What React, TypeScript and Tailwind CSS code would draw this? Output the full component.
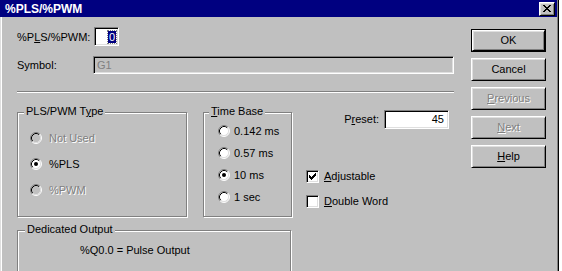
import type { ReactNode } from 'react';

const raised =
  'border border-t-white border-l-white border-r-black border-b-black shadow-[inset_1px_1px_0_#dfdfdf,inset_-1px_-1px_0_#808080]';
const sunken =
  'border border-t-[#808080] border-l-[#808080] border-r-white border-b-white shadow-[inset_1px_1px_0_#000,inset_-1px_-1px_0_#dfdfdf]';
const etched = 'border border-[#808080] shadow-[inset_1px_1px_0_#fff,1px_1px_0_#fff]';
const disabledText = 'text-[#808080] [text-shadow:1px_1px_0_#fff]';

function U({ children }: { children: ReactNode }) {
  return <span className="underline underline-offset-[1px]">{children}</span>;
}

// pixel X for the title bar close box
function CloseGlyph() {
  const rows = ['xx....xx', '.xx..xx.', '..xxxx..', '...xx...', '..xxxx..', '.xx..xx.', 'xx....xx'];
  return (
    <svg width="8" height="7" shapeRendering="crispEdges">
      {rows.flatMap((r, y) =>
        r.split('').map((c, x) => (c === 'x' ? <rect key={`${x}-${y}`} x={x} y={y} width="1" height="1" fill="#000" /> : null)),
      )}
    </svg>
  );
}

function Radio({ checked = false, disabled = false }: { checked?: boolean; disabled?: boolean }) {
  return (
    <svg width="12" height="12" viewBox="0 0 12 12" className="shrink-0">
      <circle cx="6" cy="6" r="5" fill={disabled ? '#c0c0c0' : '#fff'} />
      <path d="M2.11 9.89 A5.5 5.5 0 0 1 9.89 2.11" fill="none" stroke="#808080" />
      <path d="M9.89 2.11 A5.5 5.5 0 0 1 2.11 9.89" fill="none" stroke="#fff" />
      <path d="M2.82 9.18 A4.5 4.5 0 0 1 9.18 2.82" fill="none" stroke="#000" />
      <path d="M9.18 2.82 A4.5 4.5 0 0 1 2.82 9.18" fill="none" stroke="#dfdfdf" />
      {checked && <circle cx="6" cy="6" r="2" fill={disabled ? '#808080' : '#000'} />}
    </svg>
  );
}

function Check({ checked = false }: { checked?: boolean }) {
  const rows = ['......x', '.....xx', 'x...xxx', 'xx.xxx.', 'xxxxx..', '.xxx...', '..x....'];
  return (
    <div className={`w-[13px] h-[13px] bg-white shrink-0 ${sunken}`}>
      {checked && (
        <svg width="7" height="7" shapeRendering="crispEdges" className="ml-[2px] mt-[2px]">
          {rows.flatMap((r, y) =>
            r.split('').map((c, x) => (c === 'x' ? <rect key={`${x}-${y}`} x={x} y={y} width="1" height="1" fill="#000" /> : null)),
          )}
        </svg>
      )}
    </div>
  );
}

function Button({ children, disabled = false, isDefault = false }: { children: ReactNode; disabled?: boolean; isDefault?: boolean }) {
  const face = (
    <div className={`flex items-center justify-center h-full w-full bg-[#c0c0c0] ${raised} ${disabled ? disabledText : 'text-black'}`}>
      {children}
    </div>
  );
  return (
    <div className={`w-[75px] h-[23px] ${isDefault ? 'border border-black' : ''}`}>{face}</div>
  );
}

export default function App() {
  return (
    <div className="flex w-[562px] h-[271px] overflow-hidden bg-white font-['Liberation_Sans',Arial,sans-serif] text-[11px] leading-[13px] text-black">
      <div className="flex flex-col w-[559px] h-full bg-[#c0c0c0] shadow-[inset_1px_0_0_#dfdfdf,inset_2px_0_0_#fff,inset_-1px_0_0_#000,inset_-2px_0_0_#808080]">
        {/* title bar */}
        <div className="flex items-center justify-between h-[17px] mr-[2px] pl-[5px] pr-[2px] bg-[#000080] shrink-0">
          <span className="text-white font-bold text-[12px] leading-[14px]">%PLS/%PWM</span>
          <div className={`flex items-center justify-center w-[16px] h-[14px] bg-[#c0c0c0] ${raised}`}>
            <CloseGlyph />
          </div>
        </div>

        {/* body */}
        <div className="flex items-start pl-[17px]">
          <div className="flex flex-col w-[437px] mt-[10px]">
            <div className="flex items-center h-[19px]">
              <span className="w-[77px] pt-[2px]">
                %P<U>L</U>S/%PWM:
              </span>
              <div className={`flex items-center justify-end w-[25px] h-[19px] bg-white pr-[2px] ${sunken}`}>
                <span className="bg-[#000080] text-white px-[1px] leading-[12px] outline-1 outline-dotted outline-[#808080]">0</span>
              </div>
            </div>
            <div className="flex items-center h-[18px] mt-[10px]">
              <span className="w-[76px]">Symbol:</span>
              <div className={`flex items-center w-[361px] h-[18px] pl-[3px] ${sunken}`}>
                <span className="text-[#808080]">G1</span>
              </div>
            </div>
            <div className="h-[2px] mt-[17px] border-t border-t-[#808080] border-b border-b-white" />

            <div className="flex items-start">
              <div className="flex flex-col w-[275px]">
                <div className="flex gap-[16px] mt-[19px]">
                  <div className={`relative w-[170px] h-[105px] ${etched}`}>
                    <span className="absolute left-[6px] top-[-8px] px-[2px] bg-[#c0c0c0]">
                      PLS/PWM T<U>y</U>pe
                    </span>
                    <div className="flex flex-col gap-[14px] pt-[19px] pl-[12px]">
                      <div className="flex items-center gap-[7px] h-[12px]">
                        <Radio disabled />
                        <span className={disabledText}>Not Used</span>
                      </div>
                      <div className="flex items-center gap-[7px] h-[12px]">
                        <Radio checked />
                        <span>%PLS</span>
                      </div>
                      <div className="flex items-center gap-[7px] h-[12px]">
                        <Radio disabled />
                        <span className={disabledText}>%PWM</span>
                      </div>
                    </div>
                  </div>
                  <div className={`relative w-[89px] h-[105px] ${etched}`}>
                    <span className="absolute left-[5px] top-[-8px] px-[2px] bg-[#c0c0c0]">
                      <U>T</U>ime Base
                    </span>
                    <div className="flex flex-col gap-[10px] pt-[12px] pl-[14px]">
                      {['0.142 ms', '0.57 ms', '10 ms', '1 sec'].map((t) => (
                        <div key={t} className="flex items-center gap-[4px] h-[12px]">
                          <Radio checked={t === '10 ms'} />
                          <span>{t}</span>
                        </div>
                      ))}
                    </div>
                  </div>
                </div>
                <div className={`relative w-[274px] h-[60px] mt-[13px] ${etched}`}>
                  <span className="absolute left-[7px] top-[-8px] px-[2px] bg-[#c0c0c0]">Dedicated Output</span>
                  <div className="pt-[13px] pl-[62px]">%Q0.0 = Pulse Output</div>
                </div>
              </div>

              <div className="flex flex-col flex-1 mt-[17px]">
                <div className="flex items-center justify-end gap-[5px] pr-[5px]">
                  <span>
                    P<U>r</U>eset:
                  </span>
                  <div className={`flex items-center justify-end w-[65px] h-[19px] bg-white pr-[4px] ${sunken}`}>45</div>
                </div>
                <div className="flex flex-col gap-[12px] mt-[41px] pl-[14px]">
                  <div className="flex items-center gap-[5px] h-[13px]">
                    <Check checked />
                    <span>
                      <U>A</U>djustable
                    </span>
                  </div>
                  <div className="flex items-center gap-[5px] h-[13px]">
                    <Check />
                    <span>
                      <U>D</U>ouble Word
                    </span>
                  </div>
                </div>
              </div>
            </div>
          </div>

          <div className="flex flex-col gap-[6px] ml-[17px] mt-[12px]">
            <Button isDefault>OK</Button>
            <Button>Cancel</Button>
            <Button disabled>
              <U>P</U>revious
            </Button>
            <Button disabled>
              <U>N</U>ext
            </Button>
            <Button>
              <U>H</U>elp
            </Button>
          </div>
        </div>
      </div>
    </div>
  );
}
